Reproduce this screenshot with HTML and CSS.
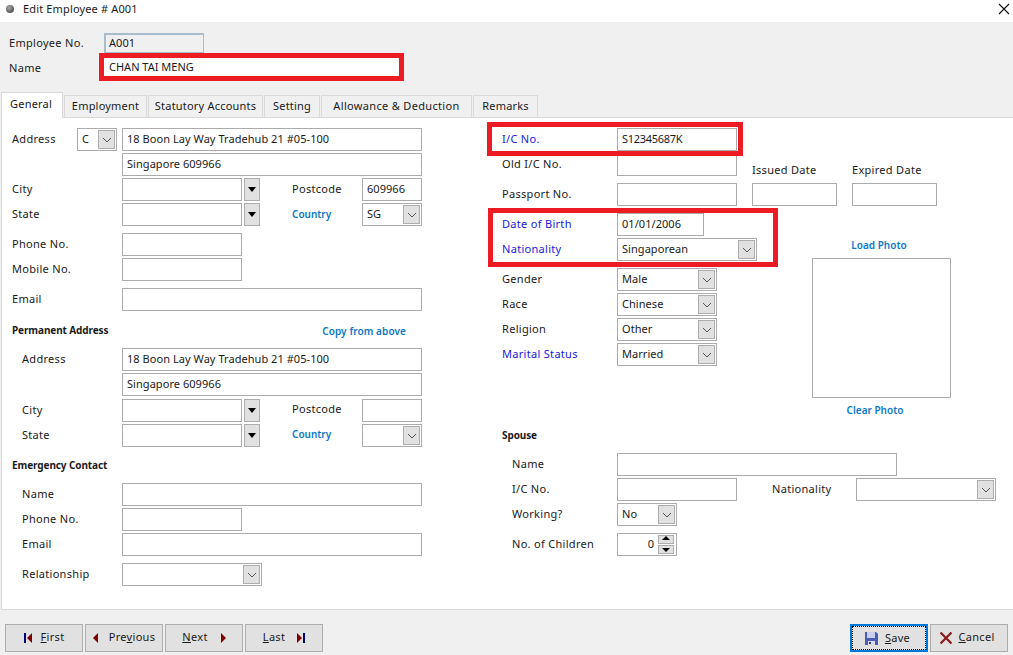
FILE: index.html
```html
<!DOCTYPE html>
<html>
<head>
<meta charset="utf-8">
<title>Edit Employee</title>
<link rel="stylesheet" href="styles.css">
</head>
<body>
<div class="window">
  <header class="titlebar">
    <span class="app-dot"></span>
    <span class="title">Edit Employee # A001</span>
    <svg class="close" width="12" height="12" viewBox="0 0 12 12"><path d="M1 1l10 10M11 1L1 11" stroke="#111" stroke-width="1.1" fill="none"/></svg>
  </header>

  <section class="head">
    <div class="row"><span class="head-lbl">Employee No.</span><div class="field ro w100">A001</div></div>
    <div class="row head-name"><span class="head-lbl">Name</span><div class="field noborder w296">CHAN TAI MENG</div></div>
  </section>

  <nav class="tabs">
    <div class="tab active">General</div>
    <div class="tab t-emp">Employment</div>
    <div class="tab t-stat">Statutory Accounts</div>
    <div class="tab t-set">Setting</div>
    <div class="tab t-all">Allowance &amp; Deduction</div>
    <div class="tab t-rem">Remarks</div>
  </nav>

  <main class="panel">
    <div class="col left">
      <div class="row"><span class="lbl lbl-addr">Address</span><div class="field select w40">C<span class="sbtn"><svg width="10" height="6" viewBox="0 0 10 6"><path d="M1 1l4 4 4-4" stroke="#555" fill="none"/></svg></span></div><div class="field w300 ml5">18 Boon Lay Way Tradehub 21 #05-100</div></div>
      <div class="row"><span class="lbl"></span><div class="field w300">Singapore 609966</div></div>
      <div class="row"><span class="lbl">City</span><div class="field w120"></div><span class="blackbtn"></span><span class="lbl-mid">Postcode</span><div class="field w60">609966</div></div>
      <div class="row"><span class="lbl">State</span><div class="field w120"></div><span class="blackbtn"></span><span class="lbl-mid link">Country</span><div class="field select w60">SG<span class="sbtn"><svg width="10" height="6" viewBox="0 0 10 6"><path d="M1 1l4 4 4-4" stroke="#555" fill="none"/></svg></span></div></div>
      <div class="row mt5"><span class="lbl">Phone No.</span><div class="field w120"></div></div>
      <div class="row"><span class="lbl">Mobile No.</span><div class="field w120"></div></div>
      <div class="row mt5"><span class="lbl">Email</span><div class="field w300"></div></div>
      <div class="row mt6 between"><span class="heading">Permanent Address</span><span class="link copy">Copy from above</span></div>
      <div class="row mt4 ind"><span class="lbl">Address</span><div class="field w300">18 Boon Lay Way Tradehub 21 #05-100</div></div>
      <div class="row ind"><span class="lbl"></span><div class="field w300">Singapore 609966</div></div>
      <div class="row mt1 ind"><span class="lbl">City</span><div class="field w120"></div><span class="blackbtn"></span><span class="lbl-mid up1">Postcode</span><div class="field w60"></div></div>
      <div class="row ind"><span class="lbl">State</span><div class="field w120"></div><span class="blackbtn"></span><span class="lbl-mid link up1">Country</span><div class="field select w60"><span class="sbtn"><svg width="10" height="6" viewBox="0 0 10 6"><path d="M1 1l4 4 4-4" stroke="#555" fill="none"/></svg></span></div></div>
      <div class="row mt5"><span class="heading">Emergency Contact</span></div>
      <div class="row mt4 ind"><span class="lbl">Name</span><div class="field w300"></div></div>
      <div class="row ind"><span class="lbl">Phone No.</span><div class="field w120"></div></div>
      <div class="row ind"><span class="lbl">Email</span><div class="field w300"></div></div>
      <div class="row mt5 ind"><span class="lbl">Relationship</span><div class="field select w140"><span class="sbtn"><svg width="10" height="6" viewBox="0 0 10 6"><path d="M1 1l4 4 4-4" stroke="#555" fill="none"/></svg></span></div></div>
    </div>

    <div class="col right">
      <div class="row"><span class="rlbl blue">I/C No.</span><div class="field w120 tight">S12345687K</div></div>
      <div class="idgroup">
        <div class="col">
          <div class="row"><span class="rlbl">Old I/C No.</span><div class="field w120"></div></div>
          <div class="row mt5"><span class="rlbl">Passport No.</span><div class="field w120"></div></div>
        </div>
        <div class="date-col date-issued"><span class="date-lbl">Issued Date</span><div class="field w85"></div></div>
        <div class="date-col date-expired"><span class="date-lbl">Expired Date</span><div class="field w85"></div></div>
      </div>
      <div class="upper mt5">
        <div class="col personal">
          <div class="row"><span class="rlbl blue">Date of Birth</span><div class="field w87">01/01/2006</div></div>
          <div class="row"><span class="rlbl blue">Nationality</span><div class="field select w140">Singaporean<span class="sbtn"><svg width="10" height="6" viewBox="0 0 10 6"><path d="M1 1l4 4 4-4" stroke="#555" fill="none"/></svg></span></div></div>
          <div class="row mt5"><span class="rlbl">Gender</span><div class="field select w100">Male<span class="sbtn"><svg width="10" height="6" viewBox="0 0 10 6"><path d="M1 1l4 4 4-4" stroke="#555" fill="none"/></svg></span></div></div>
          <div class="row"><span class="rlbl">Race</span><div class="field select w100">Chinese<span class="sbtn"><svg width="10" height="6" viewBox="0 0 10 6"><path d="M1 1l4 4 4-4" stroke="#555" fill="none"/></svg></span></div></div>
          <div class="row"><span class="rlbl">Religion</span><div class="field select w100">Other<span class="sbtn"><svg width="10" height="6" viewBox="0 0 10 6"><path d="M1 1l4 4 4-4" stroke="#555" fill="none"/></svg></span></div></div>
          <div class="row"><span class="rlbl blue">Marital Status</span><div class="field select w100">Married<span class="sbtn"><svg width="10" height="6" viewBox="0 0 10 6"><path d="M1 1l4 4 4-4" stroke="#555" fill="none"/></svg></span></div></div>
        </div>
        <div class="photo">
          <span class="link load">Load Photo</span>
          <div class="photo-box"></div>
          <span class="link clear">Clear Photo</span>
        </div>
      </div>
      <div class="row spouse"><span class="heading">Spouse</span></div>
      <div class="row mt4"><span class="rlbl ind-r">Name</span><div class="field w280"></div></div>
      <div class="row"><span class="rlbl ind-r">I/C No.</span><div class="field w120"></div><span class="lbl-nat">Nationality</span><div class="field select w140"><span class="sbtn"><svg width="10" height="6" viewBox="0 0 10 6"><path d="M1 1l4 4 4-4" stroke="#555" fill="none"/></svg></span></div></div>
      <div class="row"><span class="rlbl ind-r">Working?</span><div class="field select w60">No<span class="sbtn"><svg width="10" height="6" viewBox="0 0 10 6"><path d="M1 1l4 4 4-4" stroke="#555" fill="none"/></svg></span></div></div>
      <div class="row mt5"><span class="rlbl ind-r">No. of Children</span><div class="field w60 spin"><span class="spin-val">0</span><span class="spin-btns"><span class="up"></span><span class="down"></span></span></div></div>
    </div>
  </main>

  <footer class="footer">
    <div class="btns">
      <button class="btn"><svg width="8" height="12" viewBox="0 0 8 12"><path d="M0 1h2v10H0z" fill="#000080"/><path d="M3 6l5-5v10z" fill="#800000"/></svg><span class="btn-text"><u>F</u>irst</span></button>
      <button class="btn"><svg width="6" height="12" viewBox="0 0 6 12"><path d="M0 6l5-5v10z" fill="#800000"/></svg><span class="btn-text wide"><span>Pre<u>v</u>ious</span></span></button>
      <button class="btn"><span class="btn-text"><u>N</u>ext</span><svg class="after" width="6" height="12" viewBox="0 0 6 12"><path d="M6 6L1 1v10z" fill="#800000"/></svg></button>
      <button class="btn"><span class="btn-text"><u>L</u>ast</span><svg class="after" width="8" height="12" viewBox="0 0 8 12"><path d="M5 6L0 1v10z" fill="#800000"/><path d="M6 1h2v10H6z" fill="#000080"/></svg></button>
    </div>
    <div class="btns">
      <button class="btn focus"><span class="dots"><svg width="15" height="15" viewBox="0 0 15 15"><path d="M1 1h11l2 2v11H1z" fill="#4a5cb4"/><path d="M3 1h8v6H3z" fill="#c8d0ee"/><path d="M4 10h7v4H4z" fill="#d8dbe8"/><path d="M5 11h2v2H5z" fill="#2c3a80"/></svg><span class="btn-text save-text"><u>S</u>ave</span></span></button>
      <button class="btn cancel"><svg width="12" height="12" viewBox="0 0 12 12"><path d="M.5.5l11 11M11.500.5l-11 11" stroke="#8b1a1a" stroke-width="2.200" fill="none"/></svg><span class="btn-text cancel-text"><u>C</u>ancel</span></button>
    </div>
  </footer>

  <div class="mark m-name"></div>
  <div class="mark m-ic"></div>
  <div class="mark m-dob"></div>
</div>
</body>
</html>
```
FILE: styles.css
```css
* { box-sizing: border-box; }
html, body { margin: 0; padding: 0; }
body { width: 1013px; height: 655px; overflow: hidden; font: 11px/1 "Noto Sans", sans-serif; letter-spacing: .3px; color: #1a1a1a; background: #f0f0f0; }
.window { position: relative; width: 1013px; height: 655px; display: flex; flex-direction: column; }

.titlebar { height: 22px; background: #fff; display: flex; align-items: center; padding: 0 3px 4px 6px; flex: none; }
.app-dot { width: 8px; height: 8px; border-radius: 50%; background: radial-gradient(circle at 40% 35%, #aaa, #333); margin-right: 9px; }
.title { font-size: 11px; letter-spacing: .15px; flex: 1; padding-bottom: 2px; }

.head { height: 71px; padding: 11px 0 0 9px; display: flex; flex-direction: column; gap: 2px; flex: none; }
.head-lbl { width: 95px; padding-bottom: 2px; }
.head .row { height: 20px; }
.head-name { margin-top: 3px; }

.tabs { height: 24px; display: flex; padding-left: 1px; align-items: flex-end; flex: none; position: relative; z-index: 2; }
.tab { height: 22px; border: 1px solid #d9d9d9; border-bottom: 0; background: #f0f0f0; margin-left: 1px; display: flex; align-items: center; justify-content: center; padding-bottom: 3px; letter-spacing: .2px; }
.tab.active { height: 26px; width: 62px; margin: 0 0 -1px 0; background: #fff; padding: 0 2px 4px 0; }
.t-emp { width: 83px; margin-left: 1px; }
.t-stat { width: 115px; }
.t-set { width: 56px; }
.t-all { width: 151px; letter-spacing: .33px; }
.t-rem { width: 65px; }

.panel { height: 493px; margin-left: 1px; background: #fff; border: 1px solid #d9d9d9; border-right: 0; padding: 10px 0 0 10px; display: flex; flex: none; }
.col { display: flex; flex-direction: column; gap: 2px; }
.left { width: 490px; }
.right { flex: 1; }
.row { display: flex; align-items: center; height: 23px; flex: none; }
.mt1 { margin-top: 1px; }
.mt4 { margin-top: 4px; }
.mt5 { margin-top: 5px; }
.mt6 { margin-top: 6px; }
.ind { padding-left: 10px; }
.ind .lbl { width: 100px; }
.lbl { width: 110px; flex: none; padding-bottom: 2px; }
.lbl-addr { width: 65px; }
.lbl-mid { width: 70px; margin-left: 32px; flex: none; padding-bottom: 2px; }
.lbl-mid.up1 { padding-bottom: 4px; }
.rlbl { width: 115px; flex: none; padding-bottom: 2px; }
.ind-r { padding-left: 10px; }
.blue { color: #1a1ae0; }
.link { color: #0a78c8; font-weight: 600; font-size: 10px; letter-spacing: 0; }
.heading { font-weight: 700; font-size: 10px; letter-spacing: -.1px; padding-bottom: 2px; }
.between { width: 394px; justify-content: space-between; }
.copy { letter-spacing: .1px; }

.field { height: 23px; border: 1px solid #ababab; background: #fff; display: flex; align-items: center; padding: 0 0 2px 4px; flex: none; position: relative; white-space: nowrap; letter-spacing: .05px; }
.tight { letter-spacing: -.3px; }
.ro { background: #f0f0f0; height: 20px; border-color: #a8bccb; border-width: 2px 1px 1px 2px; padding: 0 0 2px 3px; }
.noborder { border: 0; height: 20px; padding: 0 0 3px 5px; letter-spacing: 0; }
.w40 { width: 40px; } .w60 { width: 60px; } .w85 { width: 85px; } .w87 { width: 87px; }
.w100 { width: 100px; } .w120 { width: 120px; } .w140 { width: 140px; } .w280 { width: 280px; }
.w296 { width: 296px; } .w300 { width: 300px; }
.ml5 { margin-left: 5px; }

.sbtn { position: absolute; right: 1px; top: 1px; bottom: 1px; width: 17px; background: #e1e1e1; border: 1px solid #adadad; display: flex; align-items: center; justify-content: center; }
.blackbtn { width: 16px; height: 23px; margin-left: 2px; background: #e1e1e1; border: 1px solid #adadad; flex: none; position: relative; }
.blackbtn::after { content: ""; position: absolute; left: 3px; top: 8px; border: 4px solid transparent; border-top: 5px solid #000; border-bottom: 0; }

.idgroup { display: flex; height: 53px; flex: none; }
.date-col { display: flex; flex-direction: column; justify-content: flex-end; }
.date-issued { margin-left: 15px; }
.date-expired { margin-left: 15px; }
.date-lbl { margin-bottom: 8px; }

.upper { display: flex; align-items: flex-start; }
.personal { width: 255px; }
.photo { margin-left: 55px; margin-top: 27px; width: 139px; display: flex; flex-direction: column; align-items: center; }
.load { height: 14px; margin-bottom: 4px; margin-left: -5px; }
.photo-box { width: 139px; height: 140px; border: 1px solid #ababab; }
.clear { margin-top: 7px; height: 14px; margin-left: -13px; }
.spouse { margin-top: 3px; }
.lbl-nat { width: 84px; margin-left: 35px; flex: none; padding-bottom: 2px; }

.spin { padding: 0 2px 0 0; justify-content: flex-end; }
.spin-val { margin-right: 4px; padding-bottom: 2px; }
.spin-btns { display: flex; flex-direction: column; width: 16px; height: 19px; gap: 1px; }
.spin-btns span { flex: 1; background: #e1e1e1; border: 1px solid #adadad; position: relative; }
.up::after, .down::after { content: ""; position: absolute; left: 3px; border: 4px solid transparent; }
.up::after { top: 0; border-bottom: 4px solid #000; border-top: 0; }
.down::after { top: 2px; border-top: 4px solid #000; border-bottom: 0; }

.footer { flex: 1; display: flex; justify-content: space-between; padding: 14px 5px 4px; }
.btns { display: flex; gap: 2px; }
.btn { width: 78px; height: 28px; border: 1px solid #adadad; background: #e1e1e1; display: flex; align-items: center; justify-content: center; padding: 0 0 1px; font: inherit; letter-spacing: .3px; color: inherit; }
.btn-text { margin-left: 9px; padding-bottom: 2px; }
.btn svg.after { margin-left: 12px; }
.btn .wide { margin-left: 10px; }
.btn:nth-child(3) .btn-text, .btn:nth-child(4) .btn-text { margin-left: 0; }
.focus { border: 2px solid #0078d7; padding: 0; }
.dots { width: 100%; height: 100%; border: 1px dotted #000; display: flex; align-items: center; justify-content: center; padding-right: 4px; }
.btn .save-text, .btn .cancel-text { margin-left: 6px; }
.cancel { padding-right: 3px; }

.mark { position: absolute; border: 5px solid #ed1c24; pointer-events: none; }
.m-name { left: 99px; top: 53px; width: 305px; height: 28px; }
.m-ic { left: 487px; top: 122px; width: 256px; height: 34px; }
.m-dob { left: 488px; top: 208px; width: 290px; height: 59px; }
```
